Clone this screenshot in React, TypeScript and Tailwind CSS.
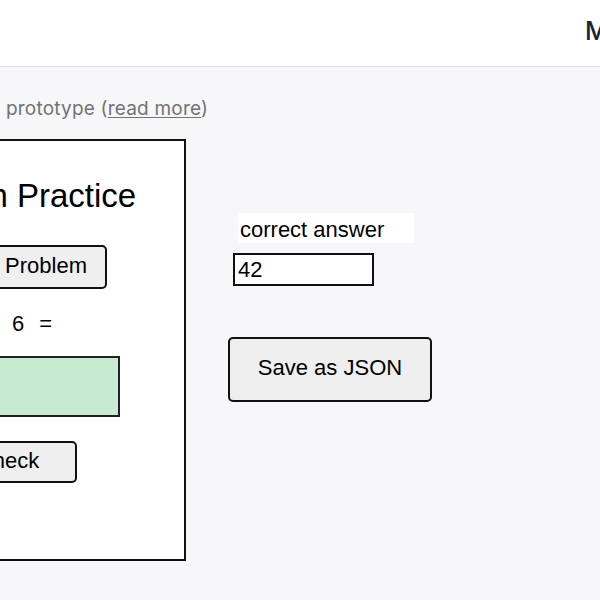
const sans = "font-['Liberation_Sans',Arial,sans-serif]";

export default function App() {
  return (
    <div className="w-[600px] h-[600px] overflow-hidden bg-[#f7f7f9] flex flex-col">
      <header className="h-[67px] shrink-0 bg-white border-b border-[#e2e2e4] flex items-center">
        <span className="ml-[585px] mt-[-2px] whitespace-nowrap text-[25px] font-medium text-[#1c2331] font-['Inter',sans-serif]">
          Menu
        </span>
      </header>

      <p className="mt-[31px] pl-[6px] text-[19px] leading-[22px] tracking-[0.2px] text-[#737373] whitespace-nowrap font-['Inter',sans-serif]">
        prototype (<a className="underline underline-offset-2">read more</a>)
      </p>

      <div className={`mt-[19px] flex items-start text-black ${sans}`}>
        <div className="-ml-[200px] w-[386px] h-[422px] shrink-0 bg-white border-2 border-[#111] flex flex-col items-start">
          <h1 className="ml-[15px] mt-[38px] text-[33px] leading-none whitespace-nowrap">
            Multiplication Practice
          </h1>
          <button className="ml-[133px] mt-[33px] w-[172px] h-[44px] bg-[#efefef] border-2 border-[#111] rounded-[5px] text-[22px] leading-none pb-[3px] whitespace-nowrap">
            New Problem
          </button>
          <div className="ml-[155px] mt-[24px] flex gap-[15px] text-[22px] leading-none">
            <span>7</span>
            <span>×</span>
            <span>6</span>
            <span>=</span>
          </div>
          <input
            readOnly
            className="ml-[98px] mt-[21px] w-[220px] h-[61px] bg-[#c6ebd0] border-2 border-[#222] outline-none"
          />
          <button className="ml-[137px] mt-[24px] w-[138px] h-[42px] bg-[#efefef] border-2 border-[#111] rounded-[5px] text-[22px] leading-none pb-[3px]">
            Check
          </button>
        </div>

        <div className="ml-[42px] mt-[74px] flex flex-col items-start">
          <label className="ml-[10px] w-[176px] h-[30px] bg-white pl-[2px] pt-[2px] text-[22px] leading-[30px] whitespace-nowrap">
            correct answer
          </label>
          <input
            readOnly
            value="42"
            className="ml-[5px] mt-[10px] w-[141px] h-[33px] bg-white border-2 border-[#111] px-[3px] text-[22px] outline-none"
          />
          <button className="mt-[51px] w-[204px] h-[65px] bg-[#efefef] border-2 border-[#111] rounded-[5px] text-[22px] leading-none pb-[3px]">
            Save as JSON
          </button>
        </div>
      </div>
    </div>
  );
}
